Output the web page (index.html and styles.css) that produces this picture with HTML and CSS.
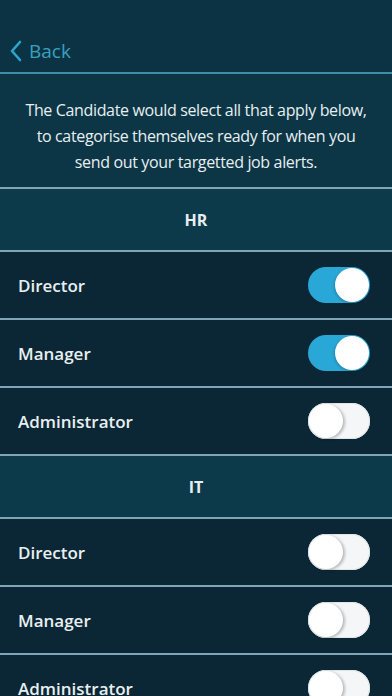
FILE: index.html
```html
<!DOCTYPE html>
<html lang="en">

<head>
    <meta charset="UTF-8">
    <meta name="viewport" content="width=device-width, initial-scale=1.0">
    <title>Job Alerts</title>
    <link rel="stylesheet" href="styles.css">
</head>

<body>
    <div class="top-bar">
        <a class="back-link" href="#">
            <svg class="back-icon" width="14" height="24" viewBox="0 0 14 24">
                <path d="M11 3 L3 12 L11 21" fill="none" stroke="#2aa6cf" stroke-width="2.6" stroke-linecap="round" stroke-linejoin="round" />
            </svg>
            <span>Back</span>
        </a>
    </div>
    <p class="intro">The Candidate would select all that apply below,<br>to categorise themselves ready for when you<br>send out your targetted job alerts.</p>

    <div class="group-title">HR</div>
    <ul class="option-list">
        <li class="option-item">Director <span class="switch on"></span></li>
        <li class="option-item">Manager <span class="switch on"></span></li>
        <li class="option-item">Administrator <span class="switch"></span></li>
    </ul>

    <div class="group-title">IT</div>
    <ul class="option-list">
        <li class="option-item">Director <span class="switch"></span></li>
        <li class="option-item">Manager <span class="switch"></span></li>
        <li class="option-item">Administrator <span class="switch"></span></li>
    </ul>
</body>

</html>
```
FILE: styles.css
```css
body {
    margin: 0;
    background: #0b2634;
    font-family: "Open Sans", "Noto Sans", sans-serif;
    color: #e8eff1;
    overflow: hidden;
}

.top-bar {
    height: 72px;
    background: #0c3343;
    border-bottom: 2px solid #3f8ea7;
    display: flex;
    align-items: flex-end;
}

.back-link {
    display: flex;
    align-items: center;
    gap: 6px;
    margin: 0 0 8px 9px;
    color: #3aa0bf;
    font-size: 19px;
    text-decoration: none;
}

.back-icon {
    display: block;
}

.intro {
    margin: 0;
    height: 115px;
    box-sizing: border-box;
    padding: 23px 4px 0;
    background: #0c3646;
    border-bottom: 2px solid #7fa6b2;
    text-align: center;
    font-size: 16px;
    line-height: 26px;
    letter-spacing: -0.35px;
    white-space: nowrap;
}

.group-title {
    height: 61px;
    background: #0d3a4b;
    border-bottom: 2px solid #7fa6b2;
    display: flex;
    align-items: center;
    justify-content: center;
    font-weight: 700;
    font-size: 16px;
}

.option-list {
    list-style: none;
    margin: 0;
    padding: 0;
}

.option-item {
    height: 66px;
    padding: 0 22px 0 18px;
    background: #0b2634;
    border-bottom: 2px solid #7fa6b2;
    display: flex;
    align-items: center;
    justify-content: space-between;
    font-size: 17px;
    font-weight: 600;
}

.switch {
    width: 62px;
    height: 36px;
    border-radius: 18px;
    background: #f4f6f7;
    position: relative;
    box-shadow: inset 0 0 0 1px #dfe4e6;
}

.switch::after {
    content: "";
    position: absolute;
    top: 1px;
    left: 1px;
    width: 34px;
    height: 34px;
    border-radius: 50%;
    background: #ffffff;
    box-shadow: 2px 1px 3px rgba(0, 0, 0, .25);
}

.switch.on {
    background: #29a8d8;
    box-shadow: none;
}

.switch.on::after {
    left: 27px;
    box-shadow: -1px 1px 3px rgba(0, 0, 0, .2);
}
```
